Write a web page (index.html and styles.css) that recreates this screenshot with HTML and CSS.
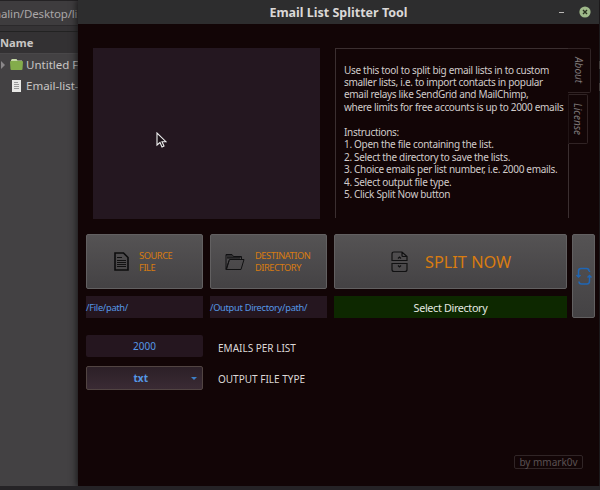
FILE: index.html
```html
<!DOCTYPE html>
<html lang="en">
<head>
<meta charset="utf-8">
<title>Email List Splitter Tool</title>
<link rel="stylesheet" href="styles.css">
</head>
<body>
<div class="desktop">
  <aside class="files">
    <div class="pathbar">nalin/Desktop/list</div>
    <div class="spacer"></div>
    <div class="column-head">Name</div>
    <div class="file-row">
      <svg class="arrow" width="6" height="8" viewBox="0 0 6 8"><path d="M1 0v8l4-4z" fill="#8a8789"/></svg>
      <svg class="folder" width="13" height="11" viewBox="0 0 13 11"><path d="M2 0h4.500l1 1.500H12V5H1V1z" fill="#c5d9a5"/><path d="M0 3q0-1 1-1h11q1 0 1 1l-.5 7q0 1-1 1h-10q-1 0-1-1z" fill="#83ac4b"/></svg>
      <span>Untitled Folder</span>
    </div>
    <div class="file-row">
      <svg class="doc" width="9" height="12" viewBox="0 0 9 12"><path d="M0 0h9v12H0z" fill="#e8e8e6"/><path d="M2 2.500h4M2 4.500h5M2 6.500h5M2 8.500h5" stroke="#999" fill="none"/></svg>
      <span>Email-list-sample</span>
    </div>
  </aside>
  <div class="right-edge"><i></i><i></i></div>

  <main class="window">
    <header class="titlebar">
      <h1>Email List Splitter Tool</h1>
      <div class="controls">
        <i class="minimize"></i>
        <svg width="12" height="12" viewBox="0 0 12 12"><circle cx="6" cy="6" r="5.600" fill="#9fb98a"/><path d="M4 4l4 4M8 4L4 8" stroke="#29301f" stroke-width="1.400"/></svg>
      </div>
    </header>

    <section class="top">
      <div class="preview">
        <svg class="cursor" width="11" height="17" viewBox="0 0 11 17"><path d="M1 1v12l3-2.500L6 15l2-1-2-4.300h4z" fill="#1b1218" stroke="#eee" stroke-width="1.100"/></svg>
      </div>
      <div class="info">
        <p>Use this tool to split big email lists in to custom<br>smaller lists, i.e. to import contacts in popular<br>email relays like SendGrid and MailChimp,<br>where limits for free accounts is up to 2000 emails</p>
        <p>Instructions:<br>1. Open the file containing the list.<br>2. Select the directory to save the lists.<br>3. Choice emails per list number, i.e. 2000 emails.<br>4. Select output file type.<br>5. Click Split Now button</p>
      </div>
      <nav class="tabs">
        <span class="tab active">About</span>
        <span class="tab">License</span>
        <span class="tab-line"></span>
      </nav>
    </section>

    <section class="actions">
      <button class="btn source">
        <svg width="15" height="19" viewBox="0 0 15 19"><path d="M1 1h8.500L14 5.500V18H1z" fill="none" stroke="#0c0c0d" stroke-width="1.600"/><path d="M3 5.500h5M3 8.500h9M3 10.500h9M3 12.500h9M3 14.500h9" stroke="#111"/></svg>
        <span>SOURCE<br>FILE</span>
      </button>
      <button class="btn destination">
        <svg width="20" height="18" viewBox="0 0 20 18" fill="none" stroke="#111112"><path d="M1 16.500V1.500h6l1.500 2h8V6M1 16.500L4.500 6.500H19l-3 10z"/><path d="M1 2h6M2 4h14M2 5h13M1.500 16.500l2.500-9"/></svg>
        <span>DESTINATION<br>DIRECTORY</span>
      </button>
      <button class="btn split">
        <svg width="17" height="22" viewBox="0 0 17 22" fill="none" stroke="#111112" stroke-width="1.200"><path d="M1 9.500V3q0-2 2-2h8l5 4.500v4zM11 1v3.500q0 1 1 1h4M1 12.500h15v6q0 2-2 2H3q-2 0-2-2z"/><path d="M7 7.500L8.500 6 10 7.500M7 14.500L8.500 16l1.500-1.500"/></svg>
        <span>SPLIT NOW</span>
      </button>
      <button class="btn reset" aria-label="Reset">
        <svg width="16" height="19" viewBox="0 0 16 19" fill="none" stroke="#1f66b5" stroke-width="1.500"><path d="M2.500 7V4q0-2.500 2.500-2.500h5.500q2.500 0 2.500 2.500M13.500 9v5q0 3-2.500 3H5.500q-2.500 0-2.500-2.500M13.500 4v1M2.500 7v3"/><path d="M.5 8l2 2 2-2M11.500 10.500l2-2 2 2"/></svg>
      </button>
      <div class="field path">/File/path/</div>
      <div class="field path">/Output Directory/path/</div>
      <div class="status">Select Directory</div>
    </section>

    <section class="options">
      <div class="field count">2000</div>
      <label>EMAILS PER LIST</label>
      <div class="select"><b>txt</b><i></i></div>
      <label>OUTPUT FILE TYPE</label>
    </section>

    <footer><span>by mmark0v</span></footer>
  </main>
</div>
</body>
</html>
```

FILE: styles.css
```css
* { box-sizing: border-box; }

body {
  margin: 0;
  font-family: "Noto Sans", sans-serif;
  background: #434143;
}

h1, p { margin: 0; font-weight: normal; }

.desktop {
  position: relative;
  width: 600px;
  height: 490px;
  overflow: hidden;
  background: #434143;
  border-bottom: 4px solid #252326;
}

/* file manager behind the tool */
.files {
  width: 78px;
  overflow: hidden;
  white-space: nowrap;
  color: #c9c6c5;
  font-size: 11.500px;
}

.pathbar {
  height: 26px;
  line-height: 25px;
  border-top: 1px solid #242224;
  border-bottom: 1px solid #2b292b;
  background: #3e3c3e;
  color: #aaa7a8;
  text-indent: -6px;
  letter-spacing: -0.150px;
}

.spacer { height: 6px; background: #353335; border-bottom: 1px solid #222; }

.column-head {
  height: 22px;
  line-height: 22px;
  background: #333133;
  border-bottom: 1px solid #494749;
  font-size: 11.200px;
  font-weight: bold;
}

.file-row { display: flex; align-items: center; height: 21px; }
.arrow { margin-right: 4px; }
.folder { margin-right: 3px; }
.doc { margin: 0 5px 0 12px; }
.file-row svg { flex: none; }

.right-edge {
  position: absolute;
  right: 0;
  top: 0;
  width: 3px;
  height: 490px;
  background: #232123;
}
.right-edge i { display: block; width: 2px; height: 8px; margin: 61px 0 -47px 1px; background: #77706b; }

/* tool window */
.window {
  position: absolute;
  left: 78px;
  top: 0;
  width: 521px;
  height: 486px;
  background: #120506;
  box-shadow: 0 0 7px 1px #161516;
  display: flex;
  flex-direction: column;
}

.titlebar {
  flex: none;
  position: relative;
  height: 24px;
  background: #2d2d2e;
  color: #dad8d7;
}
.titlebar h1 { text-align: center; font-size: 12.500px; font-weight: bold; line-height: 25px; }
.controls {
  position: absolute;
  right: 8px;
  top: 6px;
  display: flex;
  align-items: center;
  gap: 15px;
}
.minimize { width: 5px; height: 1px; background: #bbb9b7; }

.top {
  display: grid;
  grid-template-columns: 227px 234px 22px;
  column-gap: 0;
  height: 171px;
  margin: 24px 0 0 15px;
}
.preview { height: 171px; background: #241720; padding: 84px 0 0 63px; }
.cursor { display: block; }

.info {
  height: 170px;
  margin-left: 15px;
  width: 234px;
  padding: 14.500px 0 0 8px;
  border-left: 1px solid #3b2f30;
  border-top: 1px solid #3b2f30;
  color: #d1cbca;
  font-size: 10px;
  letter-spacing: -0.310px;
  line-height: 12.450px;
  white-space: nowrap;
}
.info p + p { margin-top: 12.450px; }

.tabs { display: flex; flex-direction: column; width: 23px; margin-left: 14px; }
.tab {
  height: 50px;
  width: 20px;
  display: flex;
  align-items: center;
  justify-content: center;
  writing-mode: vertical-rl;
  border: 1px solid #302324;
  border-left-color: #211516;
  border-radius: 0 2px 2px 0;
  color: #7e7777;
  font-size: 10px;
  font-style: italic;
}
.tab.active { height: 45px; width: 23px; margin-bottom: 1px; border-left: 0; }
.tab-line { height: 74px; border-left: 1px solid #3b2f30; }

.actions {
  display: grid;
  grid-template-columns: 117px 117px 233px 20px;
  grid-template-rows: 55px 22px;
  column-gap: 7px;
  row-gap: 7px;
  margin: 15px 0 0 8px;
}

.btn {
  display: flex;
  align-items: center;
  margin: 0;
  padding: 0;
  border: 1px solid #626061;
  border-radius: 2px;
  background: linear-gradient(#555354, #444244);
  color: #d97c10;
  font-family: inherit;
  text-align: left;
  white-space: nowrap;
}
.source, .destination { font-size: 9.300px; letter-spacing: -0.450px; line-height: 12px; }
.source span, .destination span { padding-top: 1px; }
.source { padding-left: 27px; gap: 10px; }
.destination { padding-left: 14px; gap: 10px; }
.split { padding-left: 56px; gap: 17px; font-size: 16.300px; }
.reset { grid-row: 1 / 3; grid-column: 4; width: 23px; margin-left: -2px; justify-content: center; }

.field { background: #25161f; color: #5598e6; }
.path { line-height: 24px; font-size: 9.300px; letter-spacing: -0.300px; white-space: nowrap; }
.status {
  background: #0d2800;
  color: #e4e9e0;
  font-size: 10.800px;
  letter-spacing: -0.350px;
  line-height: 24px;
  text-align: center;
}

.options {
  display: grid;
  grid-template-columns: 117px auto;
  grid-template-rows: 22px 24px;
  column-gap: 15px;
  row-gap: 9px;
  margin: 17px 0 0 8px;
  align-items: center;
  color: #dcd8d7;
  font-size: 10px;
}
.options label { padding-top: 3px; }
.options label:last-child { padding-top: 1px; }
.count { height: 22px; line-height: 22px; border-radius: 2px; text-align: center; }
.select {
  display: flex;
  align-items: center;
  justify-content: flex-end;
  height: 24px;
  padding-right: 5px;
  gap: 43px;
  border: 1px solid #514442;
  border-radius: 2px;
  background: linear-gradient(#2c2027, #3a2b34);
  color: #5598e6;
}
.select i { border: 3px solid transparent; border-top-color: #3d7fc6; border-bottom: 0; }

footer { margin: auto 16px 17px auto; }
footer span {
  display: block;
  width: 69px;
  height: 14px;
  border: 1px solid #302526;
  border-radius: 2px;
  color: #5b5152;
  font-size: 10px;
  line-height: 13px;
  text-align: center;
}
```
